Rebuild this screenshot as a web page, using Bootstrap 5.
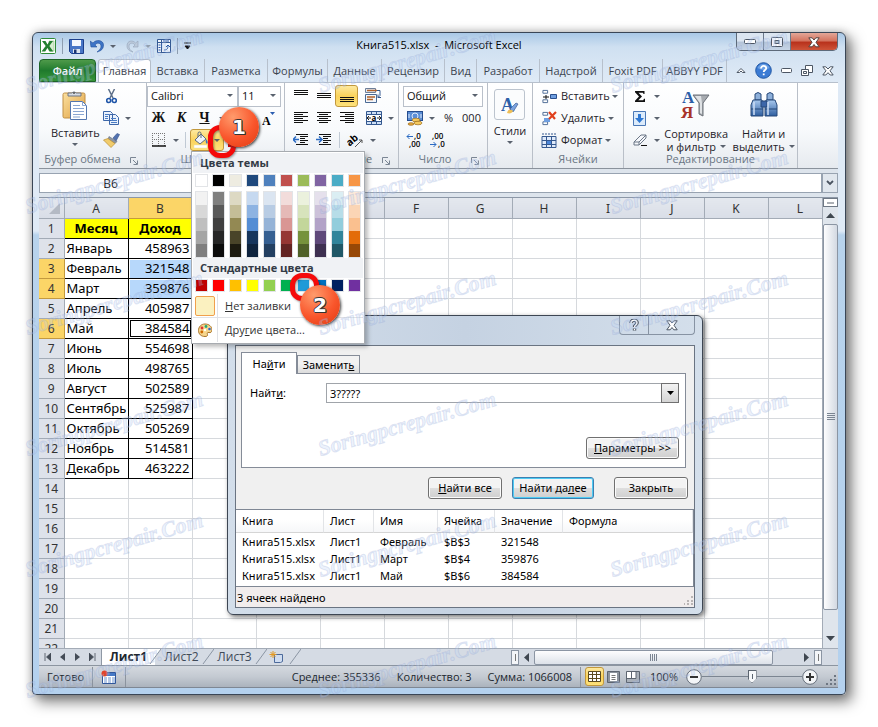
<!DOCTYPE html>
<html lang="ru">
<head>
<meta charset="utf-8">
<meta name="viewport" content="width=device-width, initial-scale=1">
<title>Книга515.xlsx - Microsoft Excel</title>
<link href="https://cdn.jsdelivr.net/npm/bootstrap@5.3.0/dist/css/bootstrap.min.css" rel="stylesheet">
<style>
body{font-family:"Open Sans","Noto Sans",sans-serif;font-size:11px;line-height:16px;color:#1f2329;background:#fff;overflow:hidden}
button,select,input{font:inherit;color:inherit}
button{border:0;background:none;padding:0}
svg{display:block;flex:none}
.win{position:relative;margin:32px;height:calc(100vh - 64px);min-width:812px;border:1px solid #3a4656;border-radius:6px 6px 4px 4px;padding:0 7px 6px 6px;
 background:linear-gradient(#a9c8e6 0,#cfe0f1 14px,#dfeaf6 48px,#dfeaf6 198px,#b8d3ec 202px,#b4d1ee 100%);box-shadow:5px 6px 14px 1px rgba(0,0,0,.5),0 0 9px rgba(0,0,0,.2)}
.titlebar{height:27px}
.title{position:absolute;left:0;right:0;top:4px;text-align:center;color:#000;pointer-events:none}
.qat{gap:6px;padding-left:1px}
.vsep{width:1px;height:16px;background:#8d9db0}
.wbtns{height:18px;border:1px solid #5d6a7a;border-top:0;border-radius:0 0 5px 5px;overflow:hidden}
.wbtns button{width:27px;height:18px;display:flex;align-items:center;justify-content:center;border-right:1px solid #6b788a;background:linear-gradient(#dbe5f1 45%,#b3c3d8 50%,#c9d7e8)}
.wbtns .close-w{width:46px;border:0;background:linear-gradient(#e3a798,#d3715c 45%,#b8301b 50%,#d0583c)}
.tabs{height:23px;color:#3d4550}
.tabs a{color:inherit;text-decoration:none;display:flex;align-items:center;justify-content:center;border-right:1px solid #b7c0cc;height:23px;white-space:nowrap}
.tabs .file{width:57px;background:linear-gradient(#4f9a4a,#1f7a2d 50%,#359539);color:#fff;font-weight:600;border:1px solid #1d6427;border-radius:4px 4px 0 0}
.tabs .act{width:53px;margin-left:2px;background:#fff;border:1px solid #b5bec9;border-bottom:0;border-radius:3px 3px 0 0}
.t1{width:54px}.t2{width:63px}.t3{width:60px}.t4{width:54px}.t5{width:63px}.t6{width:32px}.t8{width:64px}
.tico{gap:9px;padding-right:4px}
.ribbon{height:87px;background:linear-gradient(#fff,#f8fafc 55%,#e6eaef);border-bottom:1px solid #8a929c;border-top:1px solid #b7c0cc}
.grp{border-right:1px solid #b9bfc8;display:flex;flex-direction:column;padding-top:2px}
.g1{width:108px}.g2{width:138px}.g3{width:114px}.g4{width:89px}.g5{width:45px}.g6{width:91px}.g7{width:174px}
.gbody{height:66px}
.glabel{height:17px;color:#6a7684;position:relative;text-align:center;padding-right:20px;line-height:16px}
.glabel svg{position:absolute;right:8px;top:6px}
.g2 .glabel{padding-right:32px}
.g7 .glabel,.g6 .glabel{padding-right:0}
.r{height:22px;display:flex;align-items:center}
.ib{width:23px;height:22px;display:flex;align-items:center;justify-content:center}
.cr{width:11px;height:22px;display:flex;align-items:center;justify-content:center}
.caret{width:0;height:0;border:3px solid transparent;border-top:3px solid #5a626e;border-bottom:0}
.on{background:linear-gradient(#fde9a0,#fbd35b 50%,#fde27c);border:1px solid #c2983c;border-radius:3px}
.fillb{width:34px;height:22px}
.sel{appearance:none;height:21px;border:1px solid #b9c0ca;border-radius:0;padding:0 3px;color:#111;background:#fff url("data:image/svg+xml,%3Csvg xmlns='http://www.w3.org/2000/svg' width='6' height='4'%3E%3Cpath d='M0 0h6L3 3z' fill='%235a626e'/%3E%3C/svg%3E") no-repeat right 4px center}
.s-font{width:91px}.s-size{width:43px}.s-num{width:80px}
.bui{font-family:"Liberation Serif",serif;font-weight:700;font-size:14px;color:#111}
.big{display:flex;flex-direction:column;align-items:center;line-height:13px;white-space:nowrap;padding-top:5px}
.stbox{width:31px;height:31px;border:1px solid #bcc4ce;border-radius:3px;display:flex;align-items:center;justify-content:center;background:#fbfcfd}
.fbar{height:29px;background:#dde4ec;padding:4px 0;border-bottom:1px solid #8c97a6}
.fbar .nm{width:157px;border:1px solid #98a3b1;background:#fff}
.nm input{width:100%;border:0;background:none;text-align:center;padding:0 14px 0 0;color:#111;height:19px;display:block;font-size:12px}
.fbar .fx{background:#fff;border:1px solid #98a3b1;border-left:0;min-width:0}
.fbar .fx input{width:100%;height:19px;border:0;background:none}
.fbar .ch{width:16px;border:1px solid #98a3b1;background:#e1e7ee}
.sheet{font-family:"Noto Sans","Open Sans",sans-serif}
.grid{table-layout:fixed;border-collapse:collapse;width:729px;font-size:13px;line-height:19px;color:#000;background:#fff}
.grid .c0{width:25px}.grid .cx{width:64px}
.grid th,.grid td{height:20px;padding:0 2px;border-right:1px solid #d6d9dd;border-bottom:1px solid #d6d9dd;white-space:nowrap}
.grid th{font-weight:400;text-align:center;background:#dee2ea;border-color:#a3abb6;color:#333;font-size:12px;padding:0}
.grid thead th{background:linear-gradient(#e4e8ee,#d9dee7)}
.grid thead th.hot,.grid th.hot{background:#fbd567;border-color:#c49a3f}
.grid td.box{border-color:#000}
.grid td.hd{background:#ff0;font-weight:700;text-align:center}
.grid td.num{text-align:right}
.grid td.picked{background:#b7d8fb;box-shadow:inset 1px 1px #fff}
.grid td.cur{box-shadow:inset 0 0 0 1px #fff,inset 0 0 0 2px #000}
.vs{width:16px;background:#dfe5ec;border-left:1px solid #a3abb6;padding-bottom:1px}
.vs .split{height:9px;border:1px solid #6e7885;background:#fff;display:flex;align-items:center;justify-content:center}
.vs .ar,.hs .ar{width:15px;height:17px;display:flex;align-items:center;justify-content:center}
.vs .rest{height:20px;flex:none}
.thumb{border:1px solid #8b95a3;border-radius:2px;display:flex;align-items:center;justify-content:center}
.vs .thumb{background:linear-gradient(90deg,#fdfdfe,#d3d9e2)}
.bot{height:17px;background:#d5dbe4;border-top:1px solid #a3abb6;font-size:12px}
.bot .nav4{width:63px;border-right:1px solid #8f98a5}
.bot a{color:#3f4a58;text-decoration:none;line-height:15px;white-space:nowrap;display:flex}
.shtab{width:53px;justify-content:center}
.bot .cur1{background:#fff;font-weight:700;color:#20262e}
.slash{margin:0 -6px;position:relative}
.hs{width:327px}
.hs .thumb{width:239px;height:15px;background:linear-gradient(#fdfdfe,#dde2e9)}
.hs .sp{width:8px;height:15px;border:1px solid #8b95a3;background:#f3f5f8;display:flex;align-items:center;justify-content:center}
.status{height:23px;background:linear-gradient(#d4d9df,#c4cad2 50%,#abb3bd);border-top:1px solid #8c95a0;color:#20262e;border-bottom:1px solid #7e8793}
.status .seps{width:1px;height:20px;background:#8b939e}
.vw{width:19px;height:19px;display:flex;align-items:center;justify-content:center}
.zoomr{appearance:none;width:100px;height:16px;background:linear-gradient(#7c8591,#7c8591) center/100% 1px no-repeat;margin:0}
.zoomr::-webkit-slider-thumb{appearance:none;width:9px;height:13px;background:#5c6570;clip-path:polygon(0 0,100% 0,100% 65%,50% 100%,0 65%);box-shadow:inset 0 0 0 1px #5c6570,inset 0 0 0 4px #f6f8fa}
/* colour picker */
.menu{position:absolute;left:158px;top:118px;width:174px;background:#fff;border:1px solid #a7abb0;box-shadow:3px 3px 4px rgba(0,0,0,.25);padding:1px;color:#333}
.menu h2{font-size:11px;font-weight:700;line-height:20px;height:20px;background:#f0f2f5;margin:0;padding-left:7px;color:#333b46}
.sw{display:flex;gap:4px;padding:1px 0 0 2px}
.sw button{width:13px;height:13px;border:1px solid #e2e4e7;display:block}
.sw div{border:1px solid #e2e4e7;width:13px}
.sw div button{width:11px;border:0}
.mi{height:24px;width:100%;display:flex;align-items:center}
.mi .ico{width:25px;height:24px;border-right:1px solid #e0e2e6;display:flex;align-items:center;justify-content:center;margin-right:7px}
.mi.top{margin-top:2px;border-bottom:1px solid #e0e2e6}
.nofill{width:20px;height:20px;background:#fbf1c0;border:1px solid #f0a04c;border-radius:2px}
.ring{position:absolute;border:5px solid #f50a0a;border-radius:12px;filter:drop-shadow(1px 1px 1px rgba(0,0,0,.4))}
.ring1{left:175px;top:92px;width:28px;height:33px}
.ring2{left:257px;top:240px;width:29px;height:28px}
.ball{position:absolute;width:40px;height:40px;border-radius:50%;background:radial-gradient(circle at 35% 25%,#ff9b6c,#f9562c 55%,#e03a10);box-shadow:1px 1px 3px #333;color:#fff;font:700 20px/40px "DejaVu Sans",sans-serif;text-align:center;text-shadow:1px 0 #333,-1px 0 #333,0 1px #333,0 -1px #333,1px 1px #333}
.ball1{left:186px;top:74px}
.ball2{left:267px;top:252px}
/* find dialog */
.dlg{position:absolute;left:194px;top:282px;width:476px;border:1px solid #3d4653;border-radius:6px;background:linear-gradient(90deg,#d3deea,#c5d2e2 50%,#d4dfeb);padding:0 7px 6px 7px;box-shadow:2px 2px 5px rgba(0,0,0,.55);font-family:"Noto Sans","Open Sans",sans-serif;color:#000}
.dtitle{height:29px}
.dbtns{height:19px;border:1px solid #8793a3;border-top:0;border-radius:0 0 4px 4px}
.dbtns button{width:28px;height:18px;display:flex;align-items:center;justify-content:center}
.dbtns button+button{width:46px;border-left:1px solid #8793a3}
.dbody{border:1px solid #6a7482;background:#f0f0f0}
.dtabs{padding:6px 0 0 5px}
.dtabs button{border:1px solid #858c98;border-bottom:0;background:linear-gradient(#f2f2f2 45%,#dcdcdc);height:18px;width:63px}
.dtabs .sel1{width:56px;height:22px;background:#fff;margin-bottom:-1px;position:relative}
.dpanel{background:#fff;border:1px solid #858c98;height:95px;padding:9px 6px 8px 8px;margin:0 8px 0 5px}
.dpanel label{width:76px}
.btnw{border:1px solid #707070;border-radius:3px;height:22px;background:linear-gradient(#f3f3f3 48%,#dedede 52%,#cfcfcf);box-shadow:inset 0 0 0 1px #fbfbfb}
.btnw.def{border-color:#3c7fb1;box-shadow:inset 0 0 0 1px #4ecbf3}
.w74{width:74px}.w82{width:82px}.w93{width:93px}
.dact{padding:9px 6px 10px 0}
.dact .def{margin:0 20px 0 10px}
.combo input{border:1px solid #a0a4aa;border-right:0;height:20px;padding:0 3px;border-radius:0;min-width:0;outline:0;color:#000}
.combo button{width:18px;height:20px;border:1px solid #707070;background:linear-gradient(#f3f3f3,#d4d4d4);display:flex;align-items:center;justify-content:center}
.res{width:100%;table-layout:fixed;background:#fff;border-collapse:separate;border-spacing:0}
.res th{font-weight:400;height:23px;padding:0 0 0 6px;border-bottom:1px solid #d5d5d5;border-right:1px solid #e2e4e7;background:linear-gradient(#fff 45%,#f6f7f9)}
.res td{height:17px;line-height:17px;padding:0 0 0 6px}
.res .k1{width:88px}.res .k2{width:50px}.res .k3{width:64px}.res .k4{width:57px}.res .k5{width:68px}
.reswrap{border:1px solid #7f8794;border-left:0;background:#fff;height:78px}
.dstat{background:#f1eded;padding:3px 0 1px 1px}
.wm{position:absolute;inset:0;display:grid;grid-template-columns:repeat(3,1fr);grid-template-rows:repeat(6,1fr);pointer-events:none;overflow:hidden}
.wm span{align-self:center;justify-self:start;margin-left:22px;transform:rotate(-16deg);font:italic 700 22px/24px "Liberation Serif",serif;color:rgba(190,212,245,.3);-webkit-text-stroke:1px rgba(125,145,200,.2);white-space:nowrap}
</style>
<script src="https://cdn.jsdelivr.net/npm/bootstrap@5.3.0/dist/js/bootstrap.bundle.min.js"></script>
</head>
<body class="position-relative vh-100">
<svg width="0" height="0" class="position-absolute" aria-hidden="true"><defs>
<linearGradient id="bl" x2="0" y2="1"><stop stop-color="#a9c9ee"/><stop offset="1" stop-color="#2d5d9f"/></linearGradient>
<linearGradient id="gd" x2="1" y2="1"><stop stop-color="#fbe0a0"/><stop offset="1" stop-color="#e0a040"/></linearGradient>
<symbol id="launch" viewBox="0 0 8 8"><path d="M.5 6V.5H6M3 3l4 4M7.500 3.500v4h-4" fill="none" stroke="#7b8694"/></symbol>
<symbol id="cellrow" viewBox="0 0 16 16"><path d="M1.500 1.500h5v3h-5zM1.500 11.500h5v3h-5z" fill="#fff" stroke="#4b6a94"/></symbol>
</defs></svg>
<main class="win d-flex flex-column">
 <header class="titlebar d-flex justify-content-between align-items-start">
  <div class="qat d-flex align-items-center h-100">
   <svg width="16" height="16"><rect x=".5" y=".5" width="15" height="15" rx="1" fill="#fff" stroke="#2e8b37"/><path d="M9 3h5v10H9z" fill="#d6eccf" stroke="#8fbf85" stroke-width=".6"/><path d="M2 3h3.500l2 3.500L9.500 3H13L9.300 8l4 5.500H9.700L7.400 10l-2.200 3.500H1.500L5.700 8z" fill="#23802f"/></svg>
   <span class="vsep"></span>
   <button aria-label="Сохранить"><svg width="15" height="15"><path d="M.5.5h14v14h-12l-2-2z" fill="#4876c7" stroke="#1c3f8c"/><path d="M3 1h9v6H3z" fill="#f4f8ff"/><path d="M4 10h7v4H4z" fill="#dce4ef"/><path d="M5 10.500h2.500v3.500H5z" fill="#1b3572"/></svg></button>
   <button aria-label="Отменить"><svg width="14" height="14"><path d="M0 2l1 6 6 0-2-2c2-3 6-2 6 1 0 2-1 4-4 6 4-1 6.500-3 6.500-7C13.500 1 6 0 3 4z" fill="#3d74c6" stroke="#24509a" stroke-width=".6"/></svg></button>
   <span class="caret"></span>
   <button aria-label="Вернуть" class="ms-1"><svg width="13" height="14"><path d="M12 2v6H7l2-2C7 3 3 4 3 7s1 4 4 6C3 12 1 10 1 7c0-6 6-6 8.500-3z" fill="#bccadb" stroke="#93a3b8" stroke-width=".6"/></svg></button>
   <span class="caret opacity-50"></span>
   <button aria-label="Сводная таблица"><svg width="14" height="14"><path d="M.5.500h13v13H.5z" fill="#eef4fb" stroke="#355a94"/><path d="M.5 3.500h13M4.500.5v13" stroke="#355a94"/><path d="M7 11c3 0 4-1 4-5M9 8l2-2 2 2M1.500 6h2M1.500 8.500h2M1.500 11h2M6 2h6" stroke="#2a59a8" fill="none"/></svg></button>
   <span class="vsep"></span>
   <button aria-label="Настройка панели"><svg width="7" height="8"><path d="M0 1h7M1 4h5L3.500 7z" stroke="#111" fill="#111"/></svg></button>
  </div>
  <div class="title">Книга515.xlsx &nbsp;- &nbsp;Microsoft Excel</div>
  <div class="wbtns d-flex">
   <button aria-label="Свернуть"><svg width="12" height="6"><rect x=".5" y=".5" width="11" height="4" rx="1" fill="#fff" stroke="#4c5664"/></svg></button>
   <button aria-label="Развернуть"><svg width="12" height="10"><rect x=".5" y=".5" width="11" height="9" rx="1" fill="#fff" stroke="#4c5664"/><rect x="4" y="3.500" width="4" height="3" fill="#b9c8da" stroke="#4c5664"/></svg></button>
   <button class="close-w" aria-label="Закрыть окно"><svg width="12" height="11"><path d="M.8.800h3.400L6 3 7.800.8h3.400L8 5.300l3.200 4.500H7.800L6 7.500 4.200 9.800H.8L4 5.300z" fill="#fff" stroke="#55423f"/></svg></button>
  </div>
 </header>
 <nav class="tabs d-flex align-items-center">
  <a href="#" class="file">Файл</a><a href="#" class="act">Главная</a><a href="#" class="t1">Вставка</a><a href="#" class="t2">Разметка</a><a href="#" class="t3">Формулы</a><a href="#" class="t4">Данные</a><a href="#" class="t5">Рецензир</a><a href="#" class="t6">Вид</a><a href="#" class="t5">Разработ</a><a href="#" class="t5">Надстрой</a><a href="#" class="t3">Foxit PDF</a><a href="#" class="t8">ABBYY PDF</a>
  <div class="tico d-flex align-items-center ms-auto">
   <button aria-label="Свернуть ленту"><svg width="10" height="7"><path d="M1 5.500L5 1.500l4 4H6.500L5 4 3.500 5.500z" fill="#fff" stroke="#4c5664"/></svg></button>
   <button aria-label="Справка"><svg width="17" height="17"><circle cx="8.500" cy="8.500" r="7.800" fill="#3b7bd4" stroke="#2459a5"/><path d="M2.500 6a6.500 6.500 0 0 1 12 0q-6 4-12 0" fill="#8ab8ee" opacity=".6"/><path d="M6 6.500c0-3.500 5.300-3.200 5.200-.3 0 1.700-2.500 1.800-2.500 3.800M8.700 11.500v1.800" stroke="#fff" stroke-width="1.800" fill="none"/></svg></button>
   <button aria-label="Свернуть книгу"><svg width="11" height="5"><rect x=".5" y=".5" width="10" height="4" rx="1" fill="#fff" stroke="#4c5664"/></svg></button>
   <button aria-label="Восстановить книгу"><svg width="12" height="12"><path d="M4.500.5h7v7h-7z" fill="#fff" stroke="#4c5664"/><path d="M.5 4.500h7v6h-7z" fill="#fff" stroke="#4c5664"/><path d="M2.500 6.500h3v2h-3z" fill="#fff" stroke="#4c5664"/></svg></button>
   <button aria-label="Закрыть книгу"><svg width="12" height="10"><path d="M.8.800h3L6 3 8.200.8h3L8 4.800l3.200 4.200h-3L6 6.700 3.800 9h-3L4 4.800z" fill="#fff" stroke="#4c5664"/></svg></button>
  </div>
 </nav>
 <section class="ribbon d-flex">
  <div class="grp g1">
   <div class="gbody d-flex">
    <button class="big ps-2 ms-1"><svg width="28" height="32"><rect x="2" y="3" width="22" height="25" rx="1.500" fill="url(#gd)" stroke="#c08f45"/><path d="M7 6V3h4a2.500 2.500 0 0 1 4 0h5v3z" fill="#d7dce3" stroke="#6c7482"/><circle cx="13" cy="3" r="1" fill="#555"/><path d="M9.500 11.500h12l4 4v14h-16z" fill="#fff" stroke="#5577ae"/><path d="M21.500 11.500v4h4M12 18.500h11M12 21.500h11M12 24.500h11M12 27h7M12 15.500h7" stroke="#8aa6d2" fill="none"/></svg><span class="pt-1">Вставить</span><span class="caret mt-1"></span></button>
    <div>
     <div class="r"><button class="ib" aria-label="Вырезать"><svg width="11" height="15"><path d="M2.500 0L7 9M8.500 0L4 9" stroke="#5e7089" stroke-width="1.500"/><circle cx="2.700" cy="11.500" r="2" fill="none" stroke="#1f55a8" stroke-width="1.600"/><circle cx="8.300" cy="11.500" r="2" fill="none" stroke="#1f55a8" stroke-width="1.600"/></svg></button></div>
     <div class="r"><button class="ib" aria-label="Копировать"><svg width="16" height="14"><path d="M.5.5h7l2 2v7h-9zM6.500 3.500h6l3 3v7h-9z" fill="#eaf2fd" stroke="#3c66a8"/><path d="M2 3.500h4M2 5.500h3M2 7.500h3M8 7.500h5M8 9.500h6M8 11.500h6" stroke="#4a7cc4"/></svg></button><span class="cr"><span class="caret"></span></span></div>
     <div class="r"><button class="ib" aria-label="Формат по образцу"><svg width="17" height="15"><path d="M10 5l4-4.500 2.500 1L13 8z" fill="#5272b0" stroke="#33508a" stroke-width=".6"/><path d="M6 3.500l8 5-2 2-7-4z" fill="#8b95a5" stroke="#626c7c" stroke-width=".6"/><path d="M.5 7L5 5.500l7 5L8 14.500z" fill="#f1cc6c" stroke="#b98d30" stroke-width=".7"/></svg></button></div>
    </div>
   </div>
   <div class="glabel">Буфер обмена<svg width="8" height="8"><use href="#launch"/></svg></div>
  </div>
  <div class="grp g2">
   <div class="gbody">
    <div class="r"><select class="sel s-font" aria-label="Шрифт"><option>Calibri</option></select><select class="sel s-size" aria-label="Размер"><option>11</option></select></div>
    <div class="r bui"><button class="ib" aria-label="Полужирный">Ж</button><button class="ib fst-italic" aria-label="Курсив">К</button><button class="ib text-decoration-underline" aria-label="Подчёркнутый">Ч</button><span class="cr"><span class="caret"></span></span><span class="flex-grow-1"></span><button class="ib me-1" aria-label="Уменьшить шрифт"><svg width="14" height="16"><text x="0" y="15" font-size="12" font-weight="700" font-family="Liberation Serif">A</text><path d="M8 2h5l-2.500 3z" fill="#2b5db0"/></svg></button></div>
    <div class="r"><button class="ib" aria-label="Границы"><svg width="14" height="14"><path d="M0 .5h14M0 6.500h14M.5 0v13M6.500 0v13M12.500 0v13" stroke="#777" stroke-dasharray="1 1"/><path d="M0 13h14" stroke="#111" stroke-width="1.500"/></svg></button><span class="cr"><span class="caret"></span></span><span class="vsep mx-1 opacity-50"></span><button class="on fillb d-flex align-items-center" aria-label="Цвет заливки"><svg width="20" height="18"><path d="M4 9l6-6 5 5-6 5z" fill="#eef3fa" stroke="#5b6a80"/><path d="M7 6V2.500a1.500 1.500 0 0 1 3 0V7" fill="none" stroke="#5b6a80"/><path d="M15 8c2 2 2 4 1 5-1.500-1-1.500-3-1-5" fill="#3d70c0"/><path d="M3 14h13v3H3z" fill="#fff" stroke="#e8dca8" stroke-width=".5"/></svg><span class="caret mx-auto"></span></button><svg width="14" height="14" class="ms-1"><path d="M0 11h13v3H0z" fill="#d00"/></svg></div>
   </div>
   <div class="glabel">Шрифт</div>
  </div>
  <div class="grp g3">
   <div class="gbody ps-1">
    <div class="r"><button class="ib" data-al="top"></button><button class="ib" data-al="mid"></button><button class="ib on" data-al="bot"></button><button class="ib ms-1" aria-label="Перенос текста"><svg width="17" height="16"><path d="M.5.5h10v4H.5z" fill="#e3ebf6" stroke="#6f7f98"/><path d="M.5 6.500h11v8H.5z" fill="#f3f7fc" stroke="#4b6a94"/><path d="M2 2.500h10M2 9h8M2 11.500h6" stroke="#b0622a" stroke-width="1.300"/><path d="M12 2.500h3v5l-2 2m0-3v3h3" fill="none" stroke="#34588f"/></svg></button></div>
    <div class="r"><button class="ib" data-al="l"></button><button class="ib" data-al="c"></button><button class="ib" data-al="r"></button><button class="ib ms-1" aria-label="Объединить"><svg width="16" height="14"><path d="M.5.5h15v13H.5zM.5 3.500h15M.5 10.500h15M5.500.5v3M10.500.5v3M5.500 10.500v3M10.500 10.500v3" fill="#cfe0f5" stroke="#34588f"/><path d="M1 4h14v6H1z" fill="#fff"/><path d="M1 7h4M11 7h4M3 5L1 7l2 2M13 5l2 2-2 2" stroke="#222" fill="none"/><text x="5.500" y="9.500" font-size="8" font-weight="700">a</text></svg></button><span class="cr"><span class="caret"></span></span></div>
    <div class="r"><button class="ib" data-al="out"></button><button class="ib" data-al="in"></button><span class="vsep mx-1 opacity-50"></span><button class="ib" aria-label="Ориентация"><svg width="18" height="18"><text x="0" y="13" font-size="10" font-weight="700" transform="rotate(-40 5 11)">ab</text><path d="M8 16l7-7m-3 0h3v3" stroke="#555" fill="none"/></svg></button><span class="cr"><span class="caret"></span></span></div>
   </div>
   <div class="glabel">Выравнивание<svg width="8" height="8"><use href="#launch"/></svg></div>
  </div>
  <div class="grp g4 ps-1">
   <div class="gbody">
    <div class="r"><select class="sel s-num" aria-label="Числовой формат"><option>Общий</option></select></div>
    <div class="r"><button class="ib" aria-label="Денежный формат"><svg width="16" height="15"><rect x=".5" y=".5" width="15" height="9" fill="#5b8ed6" stroke="#264d8e"/><circle cx="8" cy="5" r="3" fill="none" stroke="#dfeafa"/><path d="M2 3v4M14 3v4" stroke="#dfeafa"/><ellipse cx="9" cy="9" rx="4" ry="1.800" fill="#f5c95e" stroke="#9a6b1b" stroke-width=".7"/><ellipse cx="11" cy="12" rx="4" ry="1.800" fill="#f5c95e" stroke="#9a6b1b" stroke-width=".7"/><ellipse cx="4" cy="13" rx="3" ry="1.300" fill="#e8a83e" stroke="#9a6b1b" stroke-width=".7"/></svg></button><span class="cr"><span class="caret"></span></span><button class="ib" aria-label="Проценты">%</button><button class="ib" aria-label="Разделители">000</button></div>
    <div class="r"><button class="ib" aria-label="Увеличить разрядность"><svg width="18" height="18" font-size="8" font-weight="600"><text x="8" y="8">,0</text><text x="3" y="16">,00</text><path d="M7 5.500H1M3.500 3L1 5.500 3.500 8" stroke="#2b6bc4" fill="none"/></svg></button><button class="ib" aria-label="Уменьшить разрядность"><svg width="18" height="18" font-size="8" font-weight="600"><text x="3" y="8">,00</text><text x="9" y="16">,0</text><path d="M1 13.500h6M4.500 11L7 13.500 4.500 16" stroke="#2b6bc4" fill="none"/></svg></button></div>
   </div>
   <div class="glabel">Число<svg width="8" height="8"><use href="#launch"/></svg></div>
  </div>
  <div class="grp g5 align-items-center">
   <button class="big pt-1"><span class="stbox"><svg width="18" height="18"><text x="0" y="15" font-size="18" font-weight="700" font-family="Liberation Serif" fill="#2d5fa8">A</text><path d="M9 13l6-6 2 1-5 8z" fill="#7ba3de" stroke="#3d5f96" stroke-width=".7"/><path d="M6 17c1-4 4-4 6-2-1 2-3 3-6 2" fill="#efbf55"/></svg></span><span class="mt-1">Стили</span><span class="caret mt-1"></span></button>
  </div>
  <div class="grp g6">
   <div class="gbody ps-1">
    <div class="r ps-1"><svg width="16" height="15"><use href="#cellrow"/><path d="M9.500 5.500h6v4h-6z" fill="#6f9fe0" stroke="#2a4f8c"/><path d="M2 8h6M5 6v4" stroke="#111"/></svg><button class="ps-1">Вставить</button><span class="cr"><span class="caret"></span></span></div>
    <div class="r ps-1"><svg width="16" height="15"><use href="#cellrow"/><path d="M3 7h6v4H3z" fill="#6f9fe0"/><path d="M8 1l6 7m1-7L8 8" stroke="#e0401d" stroke-width="2.200"/></svg><button class="ps-1">Удалить</button><span class="cr"><span class="caret"></span></span></div>
    <div class="r ps-1"><svg width="16" height="15"><path d="M1 3.500h14v11H1z" fill="#dfeafa" stroke="#34588f"/><path d="M1 7.500h14M1 11.500h14M5.500 3v11M10.500 3v11" stroke="#34588f"/><path d="M6 8h4v3H6z" fill="#4b86da"/><path d="M1 1h14" stroke="#34588f" stroke-dasharray="2 1"/></svg><button class="ps-1">Формат</button><span class="cr"><span class="caret"></span></span></div>
   </div>
   <div class="glabel">Ячейки</div>
  </div>
  <div class="grp g7">
   <div class="gbody d-flex">
    <div class="ps-1">
     <div class="r"><button class="ib" aria-label="Сумма"><svg width="10" height="11"><path d="M0 0h9.500v3h-1L8 1.700H3.500L7 5.400 3.300 9.200H8.200L9 7.700h1V11H0V9.700l4-4.200L0 1.300z" fill="#111"/></svg></button><span class="cr"><span class="caret"></span></span></div>
     <div class="r"><button class="ib" aria-label="Заполнить"><svg width="13" height="15"><path d="M.5.5h12v14H.5z" fill="#dcebfb" stroke="#4b78b6"/><path d="M5 3h3v4h3l-4.500 5L2 7h3z" fill="#2f78d2"/></svg></button><span class="cr"><span class="caret"></span></span></div>
     <div class="r"><button class="ib" aria-label="Очистить"><svg width="14" height="13"><path d="M1 8l7-7h5v3l-7 7H1z" fill="#f6f8fc" stroke="#6b7686"/><path d="M1 8h5l7-7M6 8v3" fill="none" stroke="#6b7686"/><path d="M8 11.500h6" stroke="#111"/></svg></button><span class="cr"><span class="caret"></span></span></div>
    </div>
    <button class="big flex-grow-1"><svg width="32" height="29" font-family="Liberation Serif" font-size="17" font-weight="700"><text x="2" y="13" fill="#2d5fa8">А</text><text x="1" y="28" fill="#a8322a">Я</text><path d="M13 5h16l-6 8v13l-4-2V13z" fill="#a7abb0" stroke="#6b7078"/><path d="M15 6h6l1 7v11l-2-1V13z" fill="#dfe2e5"/></svg><span class="pt-1 mt-1">Сортировка</span><span class="d-flex align-items-center">и фильтр<span class="caret ms-1"></span></span></button>
    <button class="big flex-grow-1"><svg width="28" height="29"><path d="M5 4q3-3 6 0v6H5zM17 4q3-3 6 0v6h-6z" fill="#8eb0da" stroke="#274878"/><path d="M3 10h9l1 5v11H1V15zM16 10h9l2 5v11H15V15z" fill="url(#bl)" stroke="#274878"/><path d="M11 11h6v6h-6z" fill="#3c66a8" stroke="#274878"/><path d="M1 19h12M15 19h12" stroke="#274878"/><path d="M4 12v13M18 12v13" stroke="#cfe0f6" stroke-width="1.500"/></svg><span class="pt-1 mt-1">Найти и</span><span class="d-flex align-items-center">выделить<span class="caret ms-1"></span></span></button>
   </div>
   <div class="glabel">Редактирование</div>
  </div>
 </section>
 <section class="fbar d-flex">
  <div class="nm flex-shrink-0"><input type="text" value="B6" aria-label="Имя ячейки"></div>
  <div class="fx flex-grow-1"><input type="text" aria-label="Строка формул"></div>
  <button class="ch d-flex align-items-center justify-content-center" aria-label="Развернуть строку"><svg width="8" height="6"><path d="M1 1l3 3 3-3" stroke="#4a5360" stroke-width="1.800" fill="none"/></svg></button>
 </section>
 <section class="sheet d-flex flex-grow-1 overflow-hidden">
  <div class="flex-grow-1 overflow-hidden bg-white"><table class="grid" id="grid"></table></div>
  <div class="vs d-flex flex-column align-items-center flex-shrink-0">
   <div class="split w-100"><svg width="7" height="2"><path d="M0 1h7" stroke="#5a626e"/></svg></div>
   <div class="ar"><svg width="9" height="5"><path d="M0 5h9L4.500 0z" fill="#3f4750"/></svg></div>
   <div class="thumb w-100 flex-grow-1"><svg width="8" height="8"><path d="M0 .5h8M0 2.500h8M0 4.500h8M0 6.500h8" stroke="#7b8592"/></svg></div>
   <div class="rest"></div>
   <div class="ar"><svg width="9" height="5"><path d="M0 0h9L4.500 5z" fill="#3f4750"/></svg></div>
  </div>
 </section>
 <section class="bot d-flex align-items-stretch">
  <div class="nav4 d-flex align-items-center justify-content-around">
   <button aria-label="Первый лист"><svg width="7" height="8"><path d="M1 0v8M7 0v8L2.500 4z" stroke="#444c57" fill="#444c57" stroke-width=".8"/></svg></button><button aria-label="Предыдущий"><svg width="5" height="8"><path d="M5 0v8L0 4z" fill="#444c57"/></svg></button><button aria-label="Следующий"><svg width="5" height="8"><path d="M0 0v8l5-4z" fill="#444c57"/></svg></button><button aria-label="Последний лист"><svg width="7" height="8"><path d="M6 0v8M0 0v8l4.500-4z" stroke="#444c57" fill="#444c57" stroke-width=".8"/></svg></button>
  </div>
  <a href="#" class="shtab cur1">Лист1</a><svg class="slash" width="12" height="16"><path d="M0 0h12L1 16H0z" fill="#fff"/><path d="M12 0L1 15" stroke="#8b95a3"/></svg><a href="#" class="shtab">Лист2</a><svg class="slash" width="12" height="16"><path d="M12 0L1 15" stroke="#8b95a3"/></svg><a href="#" class="shtab">Лист3</a><svg class="slash" width="12" height="16"><path d="M12 0L1 15" stroke="#8b95a3"/></svg>
  <button class="ms-2" aria-label="Новый лист"><svg width="16" height="14"><path d="M5.500 4.500h8v7l-2 1h-6z" fill="#cfdcf0" stroke="#4c6a9b"/><path d="M4 1v7M.5 4.500h7M1.500 2l5 5M6.500 2l-5 5" stroke="#e39a24"/></svg></button>
  <svg width="12" height="16" class="ms-1"><path d="M12 0L1 15" stroke="#8b95a3"/></svg>
  <div class="hs d-flex ms-auto align-items-center">
   <div class="sp"><svg width="1" height="7"><path d="M.5 0v7" stroke="#777"/></svg></div><div class="ar"><svg width="5" height="9"><path d="M5 0v9L0 4.500z" fill="#3f4750"/></svg></div><div class="thumb"><svg width="8" height="7"><path d="M.5 0v7M2.500 0v7M4.500 0v7M6.500 0v7" stroke="#7b8592"/></svg></div><div class="flex-grow-1"></div><div class="ar"><svg width="5" height="9"><path d="M0 0v9l5-4.500z" fill="#3f4750"/></svg></div><div class="sp me-3"><svg width="1" height="7"><path d="M.5 0v7" stroke="#777"/></svg></div>
  </div>
 </section>
 <footer class="status d-flex align-items-center flex-shrink-0">
  <span class="px-2">Готово</span><span class="seps"></span>
  <svg width="16" height="14" class="mx-2"><path d="M1.500 2.500h13v11h-13z" fill="#fff" stroke="#31579a"/><path d="M2 3h12v3H2z" fill="#4679c6"/><path d="M3 8h3M7 8h3M11 8h3M3 10h3M7 10h3M11 10h3M3 12h3M7 12h3M11 12h3" stroke="#6c94cf"/><circle cx="3.500" cy="3.500" r="3" fill="#e2452a"/></svg><span class="seps"></span>
  <span class="ms-auto">Среднее: 355336</span><span class="ms-3">Количество: 3</span><span class="ms-3 me-2">Сумма: 1066008</span><span class="seps me-1"></span>
  <button class="vw on" aria-label="Обычный"><svg width="13" height="11"><path d="M.5.5h12v10H.5zM.5 3.500h12M.5 7.500h12M4.500.5v10M8.500.5v10" fill="#fff" stroke="#5a4a20"/></svg></button><button class="vw" aria-label="Разметка страницы"><svg width="13" height="12"><path d="M.5.5h12v11H.5z" fill="#8c939c" stroke="#5d6570"/><path d="M3 2h7v8H3z" fill="#fff"/><path d="M4.500 4.500h4M4.500 6.500h4M4.500 8.500h4" stroke="#777"/></svg></button><button class="vw" aria-label="Страничный"><svg width="14" height="12"><path d="M.5.5h13v11H.5z" fill="#a9b0b9" stroke="#5d6570"/><path d="M1 1h4v6H1zM6 1h4v6H6z" fill="#fff"/><path d="M5.500 1v6.500M1 7.500h9V1" stroke="#5d6570" fill="none"/></svg></button>
  <span class="ms-2">100%</span>
  <button class="ms-2" aria-label="Уменьшить"><svg width="16" height="16"><circle cx="8" cy="8" r="7.300" fill="#f3f5f7" stroke="#666f7b"/><path d="M4 8h8" stroke="#333" stroke-width="2"/></svg></button>
  <input type="range" class="zoomr" aria-label="Масштаб">
  <button aria-label="Увеличить"><svg width="16" height="16"><circle cx="8" cy="8" r="7.300" fill="#f3f5f7" stroke="#666f7b"/><path d="M4 8h8M8 4v8" stroke="#333" stroke-width="2"/></svg></button>
  <svg width="12" height="12" class="ms-2 align-self-end"><path d="M8 0h2v2H8zM8 4h2v2H8zM4 4h2v2H4zM8 8h2v2H8zM4 8h2v2H4zM0 8h2v2H0z" fill="#6d7682"/></svg>
 </footer>

 <section class="dlg" role="dialog" aria-label="Найти и заменить">
  <div class="dtitle d-flex justify-content-end"><div class="dbtns d-flex"><button aria-label="Справка"><svg width="10" height="12"><path d="M2 4c0-4 6.500-3.500 6 0-.3 2-2.500 2-2.500 4M5.500 9.500v2" stroke="#3d4653" stroke-width="3.400" fill="none"/><path d="M2 4c0-4 6.500-3.500 6 0-.3 2-2.500 2-2.500 4M5.500 9.800v1.500" stroke="#fff" stroke-width="1.500" fill="none"/></svg></button><button aria-label="Закрыть диалог"><svg width="12" height="11"><path d="M.8.800h3.400L6 3 7.800.8h3.400L8 5.300l3.200 4.500H7.800L6 7.500 4.200 9.800H.8L4 5.300z" fill="#fff" stroke="#4c5664"/></svg></button></div></div>
  <div class="dbody">
   <div class="dtabs d-flex align-items-end"><button class="sel1">На<u>й</u>ти</button><button>Заменит<u>ь</u></button></div>
   <div class="dpanel d-flex flex-column justify-content-between">
    <div class="d-flex align-items-center"><label for="q">Найт<u>и</u>:</label><div class="combo d-flex flex-grow-1"><input id="q" type="text" class="flex-grow-1" value="3?????"><button aria-label="Список"><svg width="7" height="4"><path d="M0 0h7L3.500 4z" fill="#000"/></svg></button></div></div>
    <button class="btnw w93 align-self-end"><u>П</u>араметры &gt;&gt;</button>
   </div>
   <div class="dact d-flex justify-content-end"><button class="btnw w74"><u>Н</u>айти все</button><button class="btnw w82 def">Найти да<u>л</u>ее</button><button class="btnw w74">Закрыть</button></div>
   <div class="reswrap"><table class="res"><colgroup><col class="k1"><col class="k2"><col class="k3"><col class="k4"><col class="k5"><col></colgroup>
    <thead><tr><th>Книга</th><th>Лист</th><th>Имя</th><th>Ячейка</th><th>Значение</th><th>Формула</th></tr></thead>
    <tbody><tr><td>Книга515.xlsx</td><td>Лист1</td><td>Февраль</td><td>$B$3</td><td>321548</td><td></td></tr><tr><td>Книга515.xlsx</td><td>Лист1</td><td>Март</td><td>$B$4</td><td>359876</td><td></td></tr><tr><td>Книга515.xlsx</td><td>Лист1</td><td>Май</td><td>$B$6</td><td>384584</td><td></td></tr></tbody></table></div>
   <div class="dstat d-flex justify-content-between"><span>3 ячеек найдено</span><svg width="10" height="10" class="align-self-end"><path d="M7 0h2v2H7zM7 4h2v2H7zM3 4h2v2H3zM7 7h2v2H7zM3 7h2v2H3zM0 7h1v2H0z" fill="#b9b5b5"/></svg></div>
  </div>
 </section>

 <section class="menu" aria-label="Цвет заливки">
  <h2>Цвета темы</h2>
  <div class="sw" id="theme"></div>
  <div class="sw pt-1" id="shades"></div>
  <h2>Стандартные цвета</h2>
  <div class="sw" id="std"></div>
  <button class="mi top"><span class="ico"><span class="nofill"></span></span><span><u>Н</u>ет заливки</span></button>
  <button class="mi"><span class="ico"><svg width="14" height="14"><path d="M7 1c4 0 7 2.500 7 6 0 2-1.500 3-3 2.500-2-.5-2 1-1.500 2 .5 1.500-1 2-2.500 2C3 13.500.5 11 .5 7.500S3 1 7 1z" fill="#f6d68c" stroke="#a9752c"/><circle cx="4" cy="5" r="1.400" fill="#d33"/><circle cx="8" cy="3.500" r="1.400" fill="#2a7"/><circle cx="11.500" cy="6" r="1.300" fill="#36c"/><circle cx="3.800" cy="9" r="1.400" fill="#c60"/><circle cx="7" cy="7" r="1.200" fill="#fff"/></svg></span><span>Дру<u>г</u>ие цвета...</span></button>
 </section>
 <div class="ring ring1"></div><div class="ring ring2"></div>
 <div class="ball ball1">1</div><div class="ball ball2">2</div>
</main>
<div class="wm" id="wm" aria-hidden="true"></div>
<script>
const data=[['Январь',458963],['Февраль',321548],['Март',359876],['Апрель',405987],['Май',384584],['Июнь',554698],['Июль',498765],['Август',502589],['Сентябрь',525987],['Октябрь',505269],['Ноябрь',514581],['Декабрь',463222]];
const cols='ABCDEFGHIJKL'.split('');
let h='<colgroup><col class="c0">'+cols.map(()=>'<col class="cx">').join('')+'</colgroup><thead><tr><th><svg class="ms-auto me-1" width="11" height="11" aria-hidden="true"><path d="M11 0v11H0z" fill="#b4bac4"/></svg></th>'+cols.map(c=>`<th class="${c==='B'?'hot':''}">${c}</th>`).join('')+'</tr></thead><tbody>';
for(let r=1;r<=22;r++){
  let a='',b='',ca='',cb='';
  if(r===1){a='Месяц';b='Доход';ca=cb='box hd'}
  else if(r<=13){a=data[r-2][0];b=data[r-2][1];ca='box';cb='box num'+(r===3||r===4?' picked':'')+(r===6?' cur':'')}
  h+=`<tr><th class="${[3,4,6].includes(r)?'hot':''}">${r}</th><td class="${ca}">${a}</td><td class="${cb}">${b}</td>${'<td></td>'.repeat(10)}</tr>`;
}
document.getElementById('grid').innerHTML=h+'</tbody>';
const btn=c=>`<button style="background:${c}" aria-label="${c}"></button>`;
document.getElementById('theme').innerHTML=['#fff','#000','#eeece1','#1f497d','#4f81bd','#c0504d','#9bbb59','#8064a2','#4bacc6','#f79646'].map(btn).join('');
document.getElementById('std').innerHTML=['#c00000','#ff0000','#ffc000','#ffff00','#92d050','#00b050','#1f9ad8','#0070c0','#002060','#7030a0'].map(btn).join('');
document.getElementById('shades').innerHTML=[
['#f2f2f2','#d8d8d8','#bfbfbf','#a5a5a5','#7f7f7f'],['#7f7f7f','#595959','#3f3f3f','#262626','#0c0c0c'],['#ddd9c3','#c4bd97','#938953','#494429','#1d1b10'],['#c6d9f0','#8db3e2','#548dd4','#17365d','#0f243e'],['#dbe5f1','#b8cce4','#95b3d7','#366092','#244061'],['#f2dcdb','#e5b9b7','#d99694','#953734','#632423'],['#ebf1dd','#d7e3bc','#c3d69b','#76923c','#4f6128'],['#e5e0ec','#ccc1d9','#b2a2c7','#5f497a','#3f3151'],['#dbeef3','#b7dde8','#92cddc','#31859b','#205867'],['#fdeada','#fbd5b5','#fac08f','#e36c09','#974806']
].map(g=>'<div>'+g.map(btn).join('')+'</div>').join('');
const L={top:[1,3,5],mid:[4,6,8],bot:[8,10,12]};
const labels={top:'По верхнему краю',mid:'По середине',bot:'По нижнему краю',l:'По левому краю',c:'По центру',r:'По правому краю',out:'Уменьшить отступ',in:'Увеличить отступ'};
document.querySelectorAll('[data-al]').forEach(b=>{
  const k=b.dataset.al;let p='';
  b.setAttribute('aria-label',labels[k]);
  if(L[k])L[k].forEach(y=>p+=`M0 ${y}.5h14`);
  else if(k.length===1)for(let i=0;i<6;i++){const w=i%2?9:14;const x=k==='l'?0:k==='r'?14-w:(14-w)/2|0;p+=`M${x} ${1+2*i}.5h${w}`}
  else for(let i=0;i<6;i++){const s=i>0&&i<5;p+=`M${s?7:3} ${1+2*i}.5h${s?(i%2?8:5):12}`}
  const arrow=k==='out'?'<path d="M6 6.500H0M3 3.500L0 6.500l3 3" stroke="#2b6bc4" stroke-width="1.500" fill="none"/>':k==='in'?'<path d="M0 6.500h5M3 3.500l3 3-3 3" stroke="#2b6bc4" stroke-width="1.500" fill="none"/>':'';
  b.innerHTML=`<svg width="${L[k]||k.length===1?14:16}" height="14"><path d="${p}" stroke="#111"/>${arrow}</svg>`;
});
document.getElementById('wm').innerHTML='<span>Soringpcrepair.Com</span>'.repeat(18);
</script>
</body>
</html>
